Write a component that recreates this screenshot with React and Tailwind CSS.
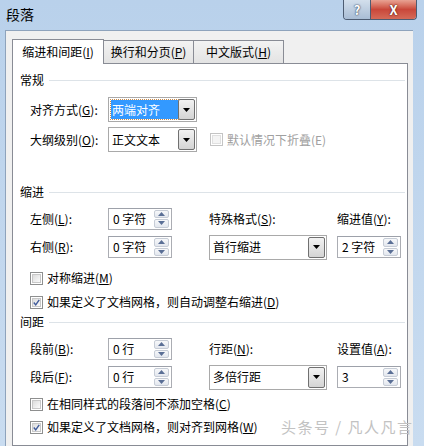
import React from 'react'

const font = { fontFamily: '"Noto Sans CJK SC", "Noto Sans", sans-serif' }

const Up = () => (
    <svg width="7" height="4" viewBox="0 0 7 4"><path d="M0 4 L3.5 0 L7 4 Z" fill="#5a6f96" /></svg>
)
const Down = () => (
    <svg width="7" height="4" viewBox="0 0 7 4"><path d="M0 0 L3.5 4 L7 0 Z" fill="#5a6f96" /></svg>
)

const Spin = ({ value }) => (
    <div className="w-[64px] h-[22px] bg-white border border-[#abadb3] border-t-[#9da1aa] flex items-center pl-[4px] pr-[2px]">
        <span className="flex-1 text-[12px] leading-none">{value}</span>
        <div className="flex flex-col w-[15px] h-[18px] gap-[1px]">
            <div className="flex-1 border border-[#c6ccd6] rounded-[2px] bg-linear-to-b from-[#f7f8fa] to-[#e3e7ee] flex items-center justify-center"><Up /></div>
            <div className="flex-1 border border-[#c6ccd6] rounded-[2px] bg-linear-to-b from-[#f7f8fa] to-[#e3e7ee] flex items-center justify-center"><Down /></div>
        </div>
    </div>
)

const Select = ({ value, width, focused }) => (
    <div className={`${width} h-[25px] bg-white border border-[#a9a9a9] flex items-stretch`}>
        <div className="flex-1 flex items-center pl-[2px] py-[2px]">
            {focused ? (
                <div className="w-full h-full bg-[#3399ff] text-white text-[12px] flex items-center pl-[1px] outline outline-1 outline-dotted outline-[#c98a4a]">{value}</div>
            ) : (
                <span className="text-[12px] pl-[1px]">{value}</span>
            )}
        </div>
        <div className="w-[17px] my-[1px] mr-[1px] border border-[#707070] rounded-[2px] bg-linear-to-b from-[#f2f2f2] to-[#d4d4d4] flex items-center justify-center">
            <svg width="7" height="4" viewBox="0 0 7 4"><path d="M0 0 L3.5 4 L7 0 Z" fill="#000" /></svg>
        </div>
    </div>
)

const Check = ({ checked, disabled }) => (
    <div className={`w-[13px] h-[13px] border ${disabled ? 'border-[#c4c4c4]' : 'border-[#8e8f8f]'} bg-white p-[1px]`}>
        <div className={`w-full h-full border ${disabled ? 'border-[#e0e0e0] bg-[#f4f4f4]' : 'border-[#c8c8c8] bg-linear-to-br from-[#dcdcdc] to-[#fbfbfb]'} flex items-center justify-center`}>
            {checked && (
                <svg width="9" height="9" viewBox="0 0 9 9"><path d="M1 4.5 L3.5 7.5 L8 1" stroke="#3f5a9a" strokeWidth="1.8" fill="none" /></svg>
            )}
        </div>
    </div>
)

const Header = ({ text, className }) => (
    <div className={`h-[20px] flex items-center ${className}`}>
        <span className="text-[12px]">{text}</span>
        <div className="flex-1 h-px bg-[#dde3e8] ml-[5px]"></div>
    </div>
)

const Label = ({ children, className = 'w-[78px] ml-[10px]' }) => (
    <span className={`${className} text-[12px] shrink-0`}>{children}</span>
)

const CheckRow = ({ children, checked, className }) => (
    <div className={`h-[20px] flex items-center ml-[10px] ${className}`}>
        <Check checked={checked} />
        <span className="ml-[4px] text-[12px]">{children}</span>
    </div>
)

const Tab = ({ children, active }) => (
    active ? (
        <div className="w-[92px] h-[25px] -mb-px bg-white border border-b-0 border-[#898c95] flex items-center justify-center text-[12px] relative z-10">{children}</div>
    ) : (
        <div className="w-[91px] h-[23px] -ml-px bg-linear-to-b from-[#f3f3f3] to-[#e3e3e3] border border-b-0 border-[#898c95] flex items-center justify-center text-[12px]">{children}</div>
    )
)

export default function App() {
    return (
        <div className="w-[424px] h-[446px] overflow-hidden relative bg-linear-to-b from-[#b9d1eb] to-[#c9dcf0] flex flex-col text-black" style={font}>
            <div className="h-[30px] shrink-0 flex items-start justify-between">
                <span className="ml-[6px] mt-[5px] text-[14px] leading-[18px]">段落</span>
                <div className="flex mr-[7px] h-[20px] border border-t-0 border-[#4d5c72] rounded-b-[4px] overflow-hidden">
                    <div className="w-[26px] bg-linear-to-b from-[#d3dfec] to-[#a9bdd5] flex items-center justify-center text-white font-bold text-[13px] [text-shadow:0_0_2px_#34445c,0_0_1px_#34445c]">?</div>
                    <div className="w-[46px] border-l border-[#4d5c72] bg-linear-to-b from-[#e8a293] via-[#c9473a] to-[#d56a58] flex items-center justify-center text-white font-bold text-[13px] [text-shadow:0_0_2px_#5a1a12,0_0_1px_#5a1a12]">X</div>
                </div>
            </div>
            <div className="flex-1 flex flex-col ml-[5px] mr-[11px] bg-[#f0f0f0] border-l border-t border-[#8ea3bc] pl-[6px] pr-[5px] pt-[8px]">
                <div className="h-[24px] flex items-end shrink-0">
                    <Tab active><span>缩进和间距(<u>I</u>)</span></Tab>
                    <Tab><span>换行和分页(<u>P</u>)</span></Tab>
                    <Tab><span>中文版式(<u>H</u>)</span></Tab>
                </div>
                <div className="flex-1 bg-white border border-[#898c95] pl-[7px] pr-[2px]">
                    <Header text="常规" className="mt-[6px]" />
                    <div className="h-[25px] mt-[7px] flex items-center">
                        <Label>对齐方式(<u>G</u>):</Label>
                        <Select value="两端对齐" width="w-[89px]" focused />
                    </div>
                    <div className="h-[25px] mt-[5px] flex items-center">
                        <Label>大纲级别(<u>O</u>):</Label>
                        <Select value="正文文本" width="w-[89px]" />
                        <div className="ml-[13px]"><Check disabled /></div>
                        <span className="ml-[4px] text-[12px] text-[#a0a0a0]">默认情况下折叠(E)</span>
                    </div>

                    <Header text="缩进" className="mt-[30px]" />
                    <div className="h-[23px] mt-[5px] flex items-center">
                        <Label>左侧(<u>L</u>):</Label>
                        <Spin value="0 字符" />
                        <Label className="w-[128px] ml-[37px]">特殊格式(<u>S</u>):</Label>
                        <Label className="">缩进值(<u>Y</u>):</Label>
                    </div>
                    <div className="h-[24px] mt-[5px] flex items-center">
                        <Label>右侧(<u>R</u>):</Label>
                        <Spin value="0 字符" />
                        <div className="ml-[37px]"><Select value="首行缩进" width="w-[118px]" /></div>
                        <div className="ml-[10px]"><Spin value="2 字符" /></div>
                    </div>
                    <CheckRow className="mt-[9px]">对称缩进(<u>M</u>)</CheckRow>
                    <CheckRow className="mt-[4px]" checked>如果定义了文档网格，则自动调整右缩进(<u>D</u>)</CheckRow>

                    <Header text="间距" />
                    <div className="h-[22px] mt-[6px] flex items-center">
                        <Label>段前(<u>B</u>):</Label>
                        <Spin value="0 行" />
                        <Label className="w-[128px] ml-[37px]">行距(<u>N</u>):</Label>
                        <Label className="">设置值(<u>A</u>):</Label>
                    </div>
                    <div className="h-[24px] mt-[5px] flex items-center">
                        <Label>段后(<u>F</u>):</Label>
                        <Spin value="0 行" />
                        <div className="ml-[37px]"><Select value="多倍行距" width="w-[118px]" /></div>
                        <div className="ml-[10px]"><Spin value="3" /></div>
                    </div>
                    <CheckRow className="mt-[5px]">在相同样式的段落间不添加空格(<u>C</u>)</CheckRow>
                    <CheckRow className="mt-[3px]" checked>如果定义了文档网格，则对齐到网格(<u>W</u>)</CheckRow>
                </div>
            </div>
            <div className="absolute left-[281px] top-[416px] text-[15px] text-[#c2c2c2] tracking-[1.5px]">头条号 / 凡人凡言</div>
        </div>
    )
}
